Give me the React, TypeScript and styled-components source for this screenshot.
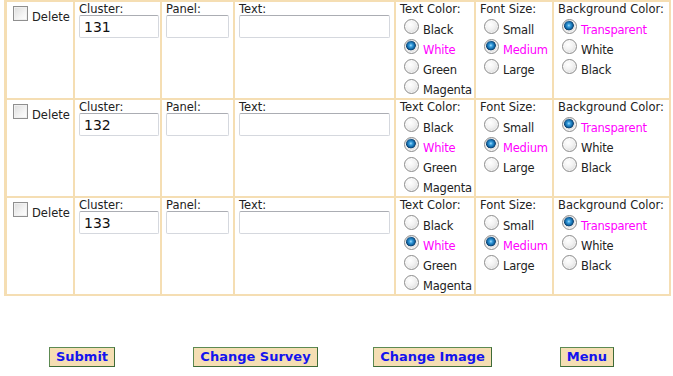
import React from 'react';
import styled, { createGlobalStyle } from 'styled-components';

const GlobalStyle = createGlobalStyle`
  html, body {
    margin: 0;
    padding: 0;
    background: #ffffff;
  }
  body {
    font-family: "DejaVu Sans", Verdana, sans-serif;
    font-size: 11.5px;
    color: #222222;
  }
`;

const Page = styled.div`
  padding-left: 4px;
  width: 669px;
`;

const Grid = styled.div`
  display: grid;
  grid-template-columns: 66px 85px 71px 159px 78px 76px 115px;
  grid-auto-rows: 96px;
  gap: 2px;
  width: fit-content;
  padding: 2px 2px 2px 3px;
  background: #f5deb3;
`;

const Cell = styled.div`
  background: #ffffff;
  padding: 1px 2px 0 4px;
  display: flex;
  flex-direction: column;
  align-items: flex-start;
`;

const DeleteCell = styled(Cell)`
  flex-direction: row;
  padding: 4px 0 0 6px;
`;

const Heading = styled.div`
  line-height: 12px;
  white-space: nowrap;
`;

const TextInput = styled.input<{ $w: number }>`
  box-sizing: border-box;
  width: ${(p) => p.$w}px;
  height: 23px;
  margin: 0;
  padding: 0 4px;
  border: 1px solid #d5d8de;
  border-top-color: #abadb3;
  border-radius: 2px;
  font-family: "DejaVu Sans", Verdana, sans-serif;
  font-size: 14px;
  color: #111;
  background: #fff;
  outline: none;
`;

const Check = styled.span`
  box-sizing: border-box;
  width: 15px;
  height: 15px;
  flex: none;
  border: 1px solid #8f8f8f;
  background: linear-gradient(135deg, #dcdcdc 0%, #f4f4f4 60%, #ffffff 100%);
  box-shadow: inset 0 0 0 1px #f0f0f0;
`;

const CheckLabel = styled.span`
  margin-left: 4px;
  padding-top: 4px;
  line-height: 14px;
`;

const Options = styled.div`
  display: flex;
  flex-direction: column;
  margin-top: 2px;
`;

const OptionRow = styled.div`
  display: flex;
  align-items: flex-start;
  height: 20px;
`;

const Radio = styled.span<{ $on: boolean }>`
  box-sizing: border-box;
  width: 15px;
  height: 15px;
  flex: none;
  margin: 2px 4px 0 4px;
  border-radius: 50%;
  border: 1px solid #8d8d8d;
  background: ${(p) =>
    p.$on
      ? 'radial-gradient(circle at 45% 42%, #a8e2ff 0px, #3aa0e0 1.5px, #136aa8 3.5px, #0b3f6e 4.6px, #e4e4e4 5.2px, #f8f8f8 100%)'
      : 'radial-gradient(circle at 40% 35%, #ffffff 0%, #f1f1f1 45%, #cfcfcf 100%)'};
  box-shadow: inset 0 0 0 1px rgba(255, 255, 255, 0.6);
`;

const OptionLabel = styled.span<{ $on: boolean }>`
  padding-top: 6px;
  line-height: 14px;
  letter-spacing: -0.2px;
  white-space: nowrap;
  color: ${(p) => (p.$on ? '#ff00ff' : '#222222')};
`;

const ButtonRow = styled.div`
  display: grid;
  grid-template-columns: 156px 191px 163px 146px;
  justify-items: center;
  margin-top: 51px;
`;

const Button = styled.button`
  height: 20px;
  padding: 0 6px;
  background: #f5deb3;
  border: 1px solid #5d8a52;
  border-right-color: #3f6b37;
  border-bottom-color: #3f6b37;
  color: #1414ee;
  font-family: "DejaVu Sans", Verdana, sans-serif;
  font-weight: bold;
  font-size: 13px;
  line-height: 18px;
  cursor: pointer;
`;

type Choice = { label: string; on: boolean };

const OptionGroup = ({ title, items }: { title: string; items: Choice[] }) => (
  <Cell>
    <Heading>{title}</Heading>
    <Options>
      {items.map((it) => (
        <OptionRow key={it.label}>
          <Radio $on={it.on} />
          <OptionLabel $on={it.on}>{it.label}</OptionLabel>
        </OptionRow>
      ))}
    </Options>
  </Cell>
);

const textColors: Choice[] = [
  { label: 'Black', on: false },
  { label: 'White', on: true },
  { label: 'Green', on: false },
  { label: 'Magenta', on: false },
];

const fontSizes: Choice[] = [
  { label: 'Small', on: false },
  { label: 'Medium', on: true },
  { label: 'Large', on: false },
];

const backgrounds: Choice[] = [
  { label: 'Transparent', on: true },
  { label: 'White', on: false },
  { label: 'Black', on: false },
];

const clusters = ['131', '132', '133'];

const App = () => (
  <Page>
    <GlobalStyle />
    <Grid>
      {clusters.map((c) => (
        <React.Fragment key={c}>
          <DeleteCell>
            <Check />
            <CheckLabel>Delete</CheckLabel>
          </DeleteCell>
          <Cell>
            <Heading>Cluster:</Heading>
            <TextInput $w={80} defaultValue={c} />
          </Cell>
          <Cell>
            <Heading>Panel:</Heading>
            <TextInput $w={63} />
          </Cell>
          <Cell>
            <Heading>Text:</Heading>
            <TextInput $w={151} />
          </Cell>
          <OptionGroup title="Text Color:" items={textColors} />
          <OptionGroup title="Font Size:" items={fontSizes} />
          <OptionGroup title="Background Color:" items={backgrounds} />
        </React.Fragment>
      ))}
    </Grid>
    <ButtonRow>
      <Button>Submit</Button>
      <Button>Change Survey</Button>
      <Button>Change Image</Button>
      <Button>Menu</Button>
    </ButtonRow>
  </Page>
);

export default App;
